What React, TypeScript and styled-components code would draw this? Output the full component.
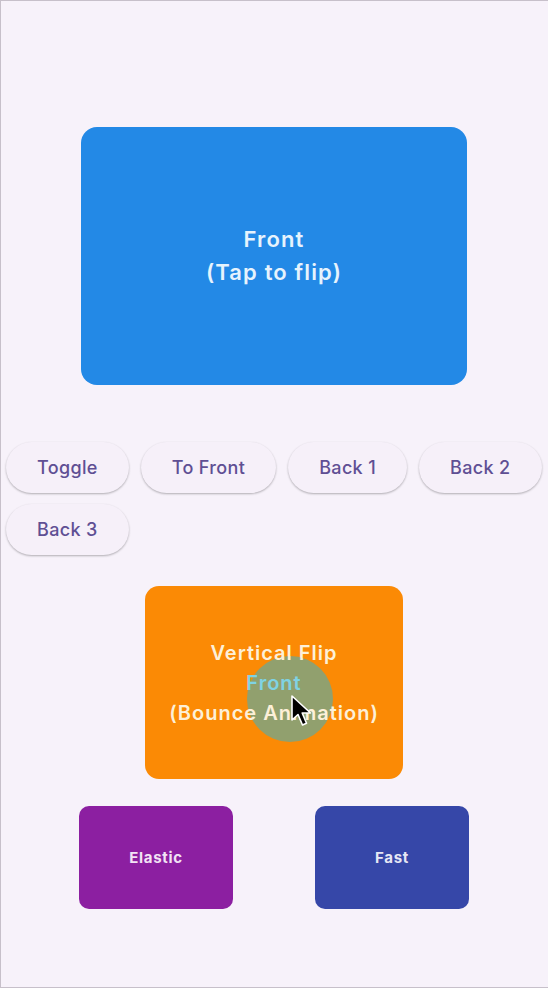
import React from "react";
import styled, { createGlobalStyle } from "styled-components";

const Global = createGlobalStyle`
  html, body { margin: 0; padding: 0; background: #f7f2fa; }
  * { box-sizing: border-box; }
`;

const Screen = styled.div`
  position: relative;
  width: 548px;
  height: 988px;
  background: #f7f2fa;
  box-shadow: inset 1px 1px 0 #c7c0ca, inset 0 -1px 0 #c7c0ca;
  font-family: Inter, "Noto Sans", sans-serif;
  display: flex;
  flex-direction: column;
  overflow: hidden;
`;

const Card = styled.div<{ $bg: string; $fg: string; $w: number; $h: number; $r: number }>`
  width: ${(p) => p.$w}px;
  height: ${(p) => p.$h}px;
  background: ${(p) => p.$bg};
  color: ${(p) => p.$fg};
  border-radius: ${(p) => p.$r}px;
  display: flex;
  flex-direction: column;
  align-items: center;
  justify-content: center;
  text-align: center;
  position: relative;
`;

const MainCard = styled(Card)`
  margin: 127px auto 0;
  font-size: 22px;
  font-weight: 600;
  line-height: 33px;
  letter-spacing: 1.15px;
`;

const ButtonBar = styled.div`
  display: flex;
  flex-wrap: wrap;
  gap: 11px 12px;
  padding-left: 6px;
  margin-top: 57px;
`;

const Pill = styled.button`
  height: 51px;
  padding: 0 31px;
  border: none;
  border-radius: 26px;
  background: #f6f0f9;
  box-shadow: 0 1px 2px rgba(0, 0, 0, 0.22), 0 1px 3px rgba(0, 0, 0, 0.08);
  color: #5f4f94;
  font-family: Inter, "Noto Sans", sans-serif;
  font-size: 18px;
  font-weight: 500;
  letter-spacing: 0.35px;
`;

const VerticalCard = styled(Card)`
  margin: 31px auto 0;
  font-size: 20px;
  font-weight: 600;
  line-height: 30px;
  letter-spacing: 1px;
`;

const Line = styled.span<{ $color?: string }>`
  position: relative;
  z-index: 2;
  color: ${(p) => p.$color || "inherit"};
`;

const BottomRow = styled.div`
  display: flex;
  justify-content: center;
  gap: 82px;
  margin-top: 27px;
`;

const SmallCard = styled(Card)`
  font-size: 15px;
  font-weight: 700;
  letter-spacing: 0.7px;
`;

const Touch = styled.div`
  position: absolute;
  left: 102px;
  top: 70px;
  width: 86px;
  height: 86px;
  border-radius: 50%;
  background: #91a06e;
  z-index: 1;
`;

const Cursor = styled.svg`
  position: absolute;
  left: 145px;
  top: 108px;
  z-index: 3;
`;

export default function App() {
  return (
    <>
      <Global />
      <Screen>
        <MainCard $bg="#2389e6" $fg="#e6f3fd" $w={386} $h={258} $r={16}>
          <span>Front</span>
          <span>(Tap to flip)</span>
        </MainCard>
        <ButtonBar>
          <Pill>Toggle</Pill>
          <Pill>To Front</Pill>
          <Pill>Back 1</Pill>
          <Pill>Back 2</Pill>
          <Pill>Back 3</Pill>
        </ButtonBar>
        <VerticalCard $bg="#fb8a05" $fg="#fdf0d8" $w={258} $h={193} $r={14}>
          <Touch />
          <Line>Vertical Flip</Line>
          <Line $color="#7fd3e3">Front</Line>
          <Line>(Bounce Animation)</Line>
          <Cursor width="26" height="34" viewBox="0 0 26 34">
            <path
              d="M2 2 L2 26 L8 20.5 L12.5 31 L16.5 29.3 L12.2 19 L20.5 19 Z"
              fill="#000"
              stroke="#fff"
              strokeWidth="1.6"
              strokeLinejoin="round"
            />
          </Cursor>
        </VerticalCard>
        <BottomRow>
          <SmallCard $bg="#8c1fa1" $fg="#f2e3f5" $w={154} $h={103} $r={10}>
            Elastic
          </SmallCard>
          <SmallCard $bg="#3647a8" $fg="#e6e8f5" $w={154} $h={103} $r={10}>
            Fast
          </SmallCard>
        </BottomRow>
      </Screen>
    </>
  );
}
